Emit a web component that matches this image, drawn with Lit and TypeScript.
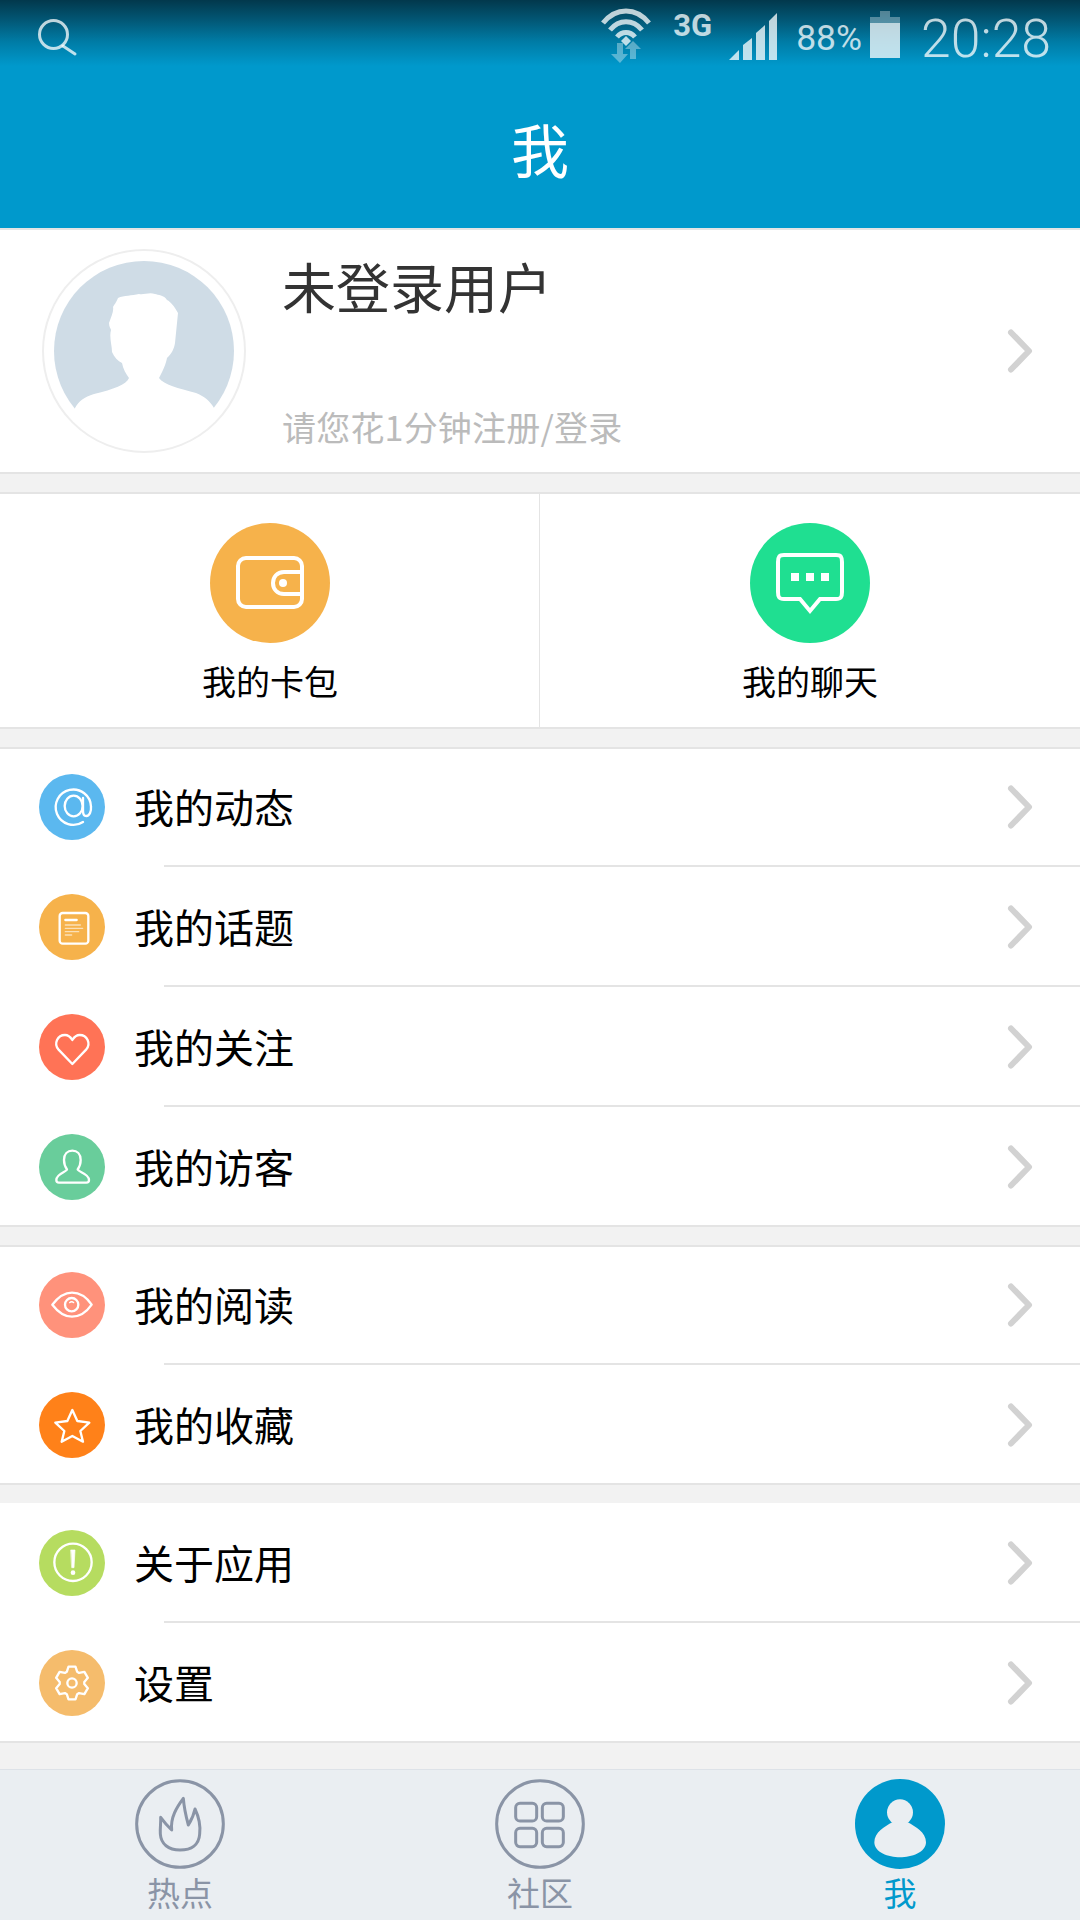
import { LitElement, html, css, svg } from 'lit';
import { customElement } from 'lit/decorators.js';

const gearPath = () => {
  const pt = (r: number, deg: number) => {
    const a = (deg * Math.PI) / 180;
    return `${(99 + r * Math.cos(a)).toFixed(1)} ${(99 + r * Math.sin(a)).toFixed(1)}`;
  };
  let d = '';
  for (let i = 0; i < 6; i++) {
    const c = i * 60 - 90;
    d += `${i ? 'L' : 'M'}${pt(37, c - 25)} L${pt(50, c - 12)} L${pt(50, c + 12)} L${pt(37, c + 25)} `;
  }
  return d + 'Z';
};

const glyphs: Record<string, unknown> = {
  at: svg`<path d="M132 144A53 53 0 1 1 156 98C157 112 152 126 142 126C134 126 132 118 132 110L132 72"/><ellipse cx="104" cy="96" rx="27" ry="31"/>`,
  note: svg`<rect x="62" y="57" width="86" height="92" rx="9"/>
    <path d="M79 78H113" stroke-width="7"/>
    <path d="M79 93H124M79 103H131M79 113H119M79 123H98" stroke-width="4" opacity=".6"/>`,
  heart: svg`<path d="M100 150L58 106C44 88 55 63 78 63C88 63 95 70 100 78C105 70 112 63 122 63C145 63 156 88 142 106Z"/>`,
  user: svg`<path d="M84 106C84 114 52 118 52 138C52 143 55 146 60 146L142 146C147 146 150 143 150 138C150 118 116 114 116 106C122 98 125 90 125 78C125 60 114 50 100 50C86 50 75 60 75 78C75 90 78 98 84 106Z"/>`,
  eye: svg`<path d="M40 98C60 72 80 62 99 62C118 62 140 72 158 98C140 124 118 134 99 134C80 134 60 124 40 98Z"/>
    <circle cx="98" cy="98" r="20"/><path d="M92 92a8 8 0 0 1 12 0" stroke-width="4"/>`,
  star: svg`<polygon points="100,54 115,87 151,92 124,117 132,149 100,132 68,149 76,117 49,92 85,87"/>`,
  info: svg`<circle cx="102" cy="97" r="56"/><path d="M96 60H108L105 113H99Z" fill="#fff" stroke-width="2"/><circle cx="102" cy="128" r="7" fill="#fff" stroke="none"/>`,
  gear: svg`<path d=${gearPath()}/><circle cx="99" cy="99" r="14"/>`,
};

const groups = [
  [
    { label: '我的动态', color: '#5bb8ef', icon: 'at' },
    { label: '我的话题', color: '#f6b24b', icon: 'note' },
    { label: '我的关注', color: '#ff7356', icon: 'heart' },
    { label: '我的访客', color: '#69cd9b', icon: 'user' },
  ],
  [
    { label: '我的阅读', color: '#ff927b', icon: 'eye' },
    { label: '我的收藏', color: '#ff8119', icon: 'star' },
  ],
  [
    { label: '关于应用', color: '#b6dc60', icon: 'info' },
    { label: '设置', color: '#f5bc6c', icon: 'gear' },
  ],
];

@customElement('app-root')
export class AppRoot extends LitElement {
  static styles = css`
    :host {
      display: block;
      width: 1080px;
      height: 1920px;
      background: #f2f2f2;
      font-family: 'Noto Sans CJK SC', 'Noto Sans', sans-serif;
      color: #000;
      overflow: hidden;
    }
    .header {
      height: 228px;
      background: linear-gradient(#02384c 0, #025775 20px, #007ca6 42px, #0099cc 66px);
    }
    .status {
      display: flex;
      align-items: flex-start;
      height: 66px;
      padding: 0 29px 0 36px;
      color: rgba(255, 255, 255, 0.75);
      font-family: Roboto, sans-serif;
    }
    .search {
      margin: 16px auto 0 0;
    }
    .wifi {
      margin-top: 6px;
    }
    .net {
      margin: 8px 17px 0 19.5px;
      font-size: 31px;
      line-height: 36px;
      font-weight: 700;
    }
    .signal {
      margin-top: 13px;
    }
    .pct {
      margin: 18px 8px 0 19px;
      font-size: 35.5px;
      line-height: 40px;
    }
    .battery {
      margin-top: 11px;
    }
    .time {
      margin: 9px 0 0 21px;
      font-size: 53.5px;
      line-height: 60px;
      font-weight: 300;
    }
    .title {
      margin-top: 52px;
      text-align: center;
      color: #fff;
      font-size: 58px;
      line-height: 60px;
    }
    .profile {
      display: flex;
      align-items: center;
      height: 246px;
      box-sizing: border-box;
      padding-left: 42px;
      background: #fff;
      border-top: 2px solid #e4e4e4;
      border-bottom: 2px solid #e4e4e4;
    }
    .avatar {
      flex: none;
      display: block;
    }
    .who {
      display: flex;
      flex-direction: column;
      gap: 91px;
      margin: 0 auto 0 36px;
    }
    .name {
      font-size: 54px;
      line-height: 60px;
      color: #333;
    }
    .hint {
      font-size: 34px;
      line-height: 40px;
      letter-spacing: 0.2px;
      color: #bbb;
    }
    .cells {
      display: grid;
      grid-template-columns: 540px 540px;
      height: 237px;
      box-sizing: border-box;
      margin-top: 18px;
      background: #fff;
      border-top: 2px solid #e4e4e4;
      border-bottom: 2px solid #e4e4e4;
    }
    .cell {
      display: flex;
      flex-direction: column;
      align-items: center;
      padding-top: 29px;
    }
    .cell + .cell {
      border-left: 1px solid #e4e4e4;
      margin-left: -1px;
    }
    .cell span {
      margin-top: 18px;
      font-size: 34px;
      line-height: 40px;
    }
    .group {
      position: relative;
      margin-top: 18px;
      background: #fff;
    }
    .group.lined::before {
      content: '';
      position: absolute;
      left: 0;
      right: 0;
      top: 0;
      height: 2px;
      background: #e4e4e4;
    }
    .row {
      position: relative;
      display: flex;
      align-items: center;
      height: 120px;
      padding-left: 39px;
      font-size: 40px;
    }
    .row::after {
      content: '';
      position: absolute;
      left: 164px;
      right: 0;
      bottom: 0;
      height: 2px;
      background: #e4e4e4;
    }
    .row:last-child::after {
      left: 0;
    }
    .row .label {
      margin: 0 0 3px 29px;
    }
    .chev {
      flex: none;
      margin: 0 42px 0 auto;
    }
    .ico {
      flex: none;
      display: block;
    }
    .ico .lines {
      fill: none;
      stroke: #fff;
      stroke-width: 7;
      stroke-linejoin: round;
      stroke-linecap: round;
    }
    .tabs {
      display: grid;
      grid-template-columns: repeat(3, 360px);
      height: 151px;
      box-sizing: border-box;
      margin-top: 26px;
      padding-top: 9px;
      background: #eaeef2;
      border-top: 1px solid #dde2e8;
    }
    .tab {
      display: flex;
      flex-direction: column;
      align-items: center;
      color: #8a94a6;
      font-size: 33px;
      line-height: 40px;
    }
    .tab.on {
      color: #0099cc;
    }
    .tab span {
      margin-top: 3px;
    }
  `;

  private chevron() {
    return html`<svg class="chev" width="36" height="56" viewBox="0 0 36 56" fill="none" stroke="#d2d2d2" stroke-width="6" stroke-linecap="round" stroke-linejoin="round">
      <path d="M9 9.5L27 28L9 46.5" />
    </svg>`;
  }

  private statusBar() {
    return html`<div class="status">
      <svg class="search" width="44" height="44" viewBox="0 0 44 44" fill="none" stroke="currentColor" stroke-width="3" stroke-linecap="round">
        <circle cx="17.5" cy="18.5" r="14" />
        <path d="M27 30L39 38" />
      </svg>
      <svg class="wifi" width="56" height="58" viewBox="0 0 56 58">
        <g fill="none" stroke="currentColor" stroke-width="5">
          <path d="M5 17C18 1 38 1 51 17" />
          <path d="M12 24C21 13 35 13 44 24" />
          <path d="M19 31C24 25 32 25 37 31" />
        </g>
        <path d="M23 35L28 30L33 35L28 40Z" fill="currentColor" />
        <g fill="#fff" opacity=".35">
          <path d="M19 37H25V48H30L22 57L13 48H19Z" />
          <path d="M32 53V43H27L35 35L43 43H38V53Z" />
        </g>
      </svg>
      <span class="net">3G</span>
      <svg class="signal" width="48" height="47" viewBox="0 0 48 47" fill="currentColor">
        <path d="M0 47L10 37V47Z" />
        <path d="M14 47V32L23 25V47Z" />
        <path d="M27 47V20L36 12V47Z" />
        <path d="M40 47V8L48 0V47Z" />
      </svg>
      <span class="pct">88%</span>
      <svg class="battery" width="30" height="47" viewBox="0 0 30 47">
        <path d="M10 0H20V6H30V12H0V6H10Z" fill="#fff" opacity=".32" />
        <rect y="12" width="30" height="35" fill="currentColor" />
      </svg>
      <span class="time">20:28</span>
    </div>`;
  }

  private avatar() {
    return html`<svg class="avatar" width="204" height="204" viewBox="-12 -12 204 204">
      <defs>
        <clipPath id="face"><circle cx="90" cy="90" r="92" /></clipPath>
      </defs>
      <circle cx="90" cy="90" r="101" fill="#fff" stroke="#eee" stroke-width="2" />
      <circle cx="90" cy="90" r="90" fill="#cfdce6" />
      <path clip-path="url(#face)" fill="#fff" d="M75 117C72 124 60 128 40 133C30 136 25 140 21 147L12 190L168 190L160 147C156 140 150 135 142 132C124 127 110 124 105 117C110 108 112 102 113 97C118 92 120 88 121 82L124 52C120 45 117 41 113 39C110 34 104 34 101 33C95 31 90 34 85 33C78 35 70 34 64 37C62 42 60 44 59 46C60 50 57 56 55 62C55 66 57 68 57 69C55 76 58 84 58 91C60 96 64 100 68 102C69 108 72 113 75 117Z" />
    </svg>`;
  }

  private wallet() {
    return html`<svg class="ico" width="120" height="120" viewBox="0 0 120 120">
      <circle cx="60" cy="60" r="60" fill="#f6b24b" />
      <g fill="none" stroke="#fff" stroke-width="4">
        <rect x="28" y="35" width="64" height="49" rx="8" />
        <path d="M92 49H74C67 49 63 54 63 60C63 66 67 71 74 71H92" />
      </g>
      <circle cx="73" cy="60" r="4" fill="#fff" />
    </svg>`;
  }

  private chat() {
    return html`<svg class="ico" width="120" height="120" viewBox="0 0 120 120">
      <circle cx="60" cy="60" r="60" fill="#1fdf91" />
      <path d="M34 32H86C91 32 92 34 92 39V69C92 74 91 76 86 76H70L60 88L50 76H34C29 76 28 74 28 69V39C28 34 29 32 34 32Z" fill="none" stroke="#fff" stroke-width="4" />
      <path d="M41 50h8v8h-8zM56 50h8v8h-8zM71 50h8v8h-8z" fill="#fff" />
    </svg>`;
  }

  private tabs() {
    return html`<div class="tabs">
      <div class="tab">
        <svg class="ico" width="90" height="90" viewBox="0 0 270 270" fill="none" stroke="currentColor" stroke-width="9" stroke-linejoin="round">
          <circle cx="135" cy="135" r="130" />
          <path d="M135 213C100 213 78 195 76 165C75 145 78 128 77 115C88 130 98 142 110 153C106 115 125 85 145 58C147 85 153 112 160 138C170 122 177 105 180 90C192 115 197 140 194 165C192 197 170 213 135 213Z" />
        </svg>
        <span>热点</span>
      </div>
      <div class="tab">
        <svg class="ico" width="90" height="90" viewBox="0 0 270 270" fill="none" stroke="currentColor" stroke-width="9">
          <circle cx="135" cy="135" r="130" />
          <rect x="62" y="73" width="63" height="53" rx="13" />
          <rect x="142" y="73" width="63" height="53" rx="13" />
          <rect x="62" y="148" width="63" height="55" rx="13" />
          <rect x="142" y="148" width="63" height="55" rx="13" />
        </svg>
        <span>社区</span>
      </div>
      <div class="tab on">
        <svg class="ico" width="90" height="90" viewBox="0 0 270 270">
          <circle cx="135" cy="135" r="135" fill="#0099cc" />
          <circle cx="135" cy="100" r="39" fill="#eaeef2" />
          <path d="M112 130C90 142 58 160 58 190C58 220 100 235 135 235C170 235 213 220 213 190C213 160 180 142 158 130Z" fill="#eaeef2" />
        </svg>
        <span>我</span>
      </div>
    </div>`;
  }

  render() {
    return html`
      <div class="header">
        ${this.statusBar()}
        <div class="title">我</div>
      </div>
      <div class="profile">
        ${this.avatar()}
        <div class="who">
          <div class="name">未登录用户</div>
          <div class="hint">请您花1分钟注册/登录</div>
        </div>
        ${this.chevron()}
      </div>
      <div class="cells">
        <div class="cell">${this.wallet()}<span>我的卡包</span></div>
        <div class="cell">${this.chat()}<span>我的聊天</span></div>
      </div>
      ${groups.map(
        (rows, i) => html`<div class="group ${i < 2 ? 'lined' : ''}">
          ${rows.map(
            (row) => html`<div class="row">
              <svg class="ico" width="66" height="66" viewBox="0 0 198 198">
                <circle cx="99" cy="99" r="99" fill=${row.color} />
                <g class="lines">${glyphs[row.icon]}</g>
              </svg>
              <span class="label">${row.label}</span>
              ${this.chevron()}
            </div>`
          )}
        </div>`
      )}
      ${this.tabs()}
    `;
  }
}
